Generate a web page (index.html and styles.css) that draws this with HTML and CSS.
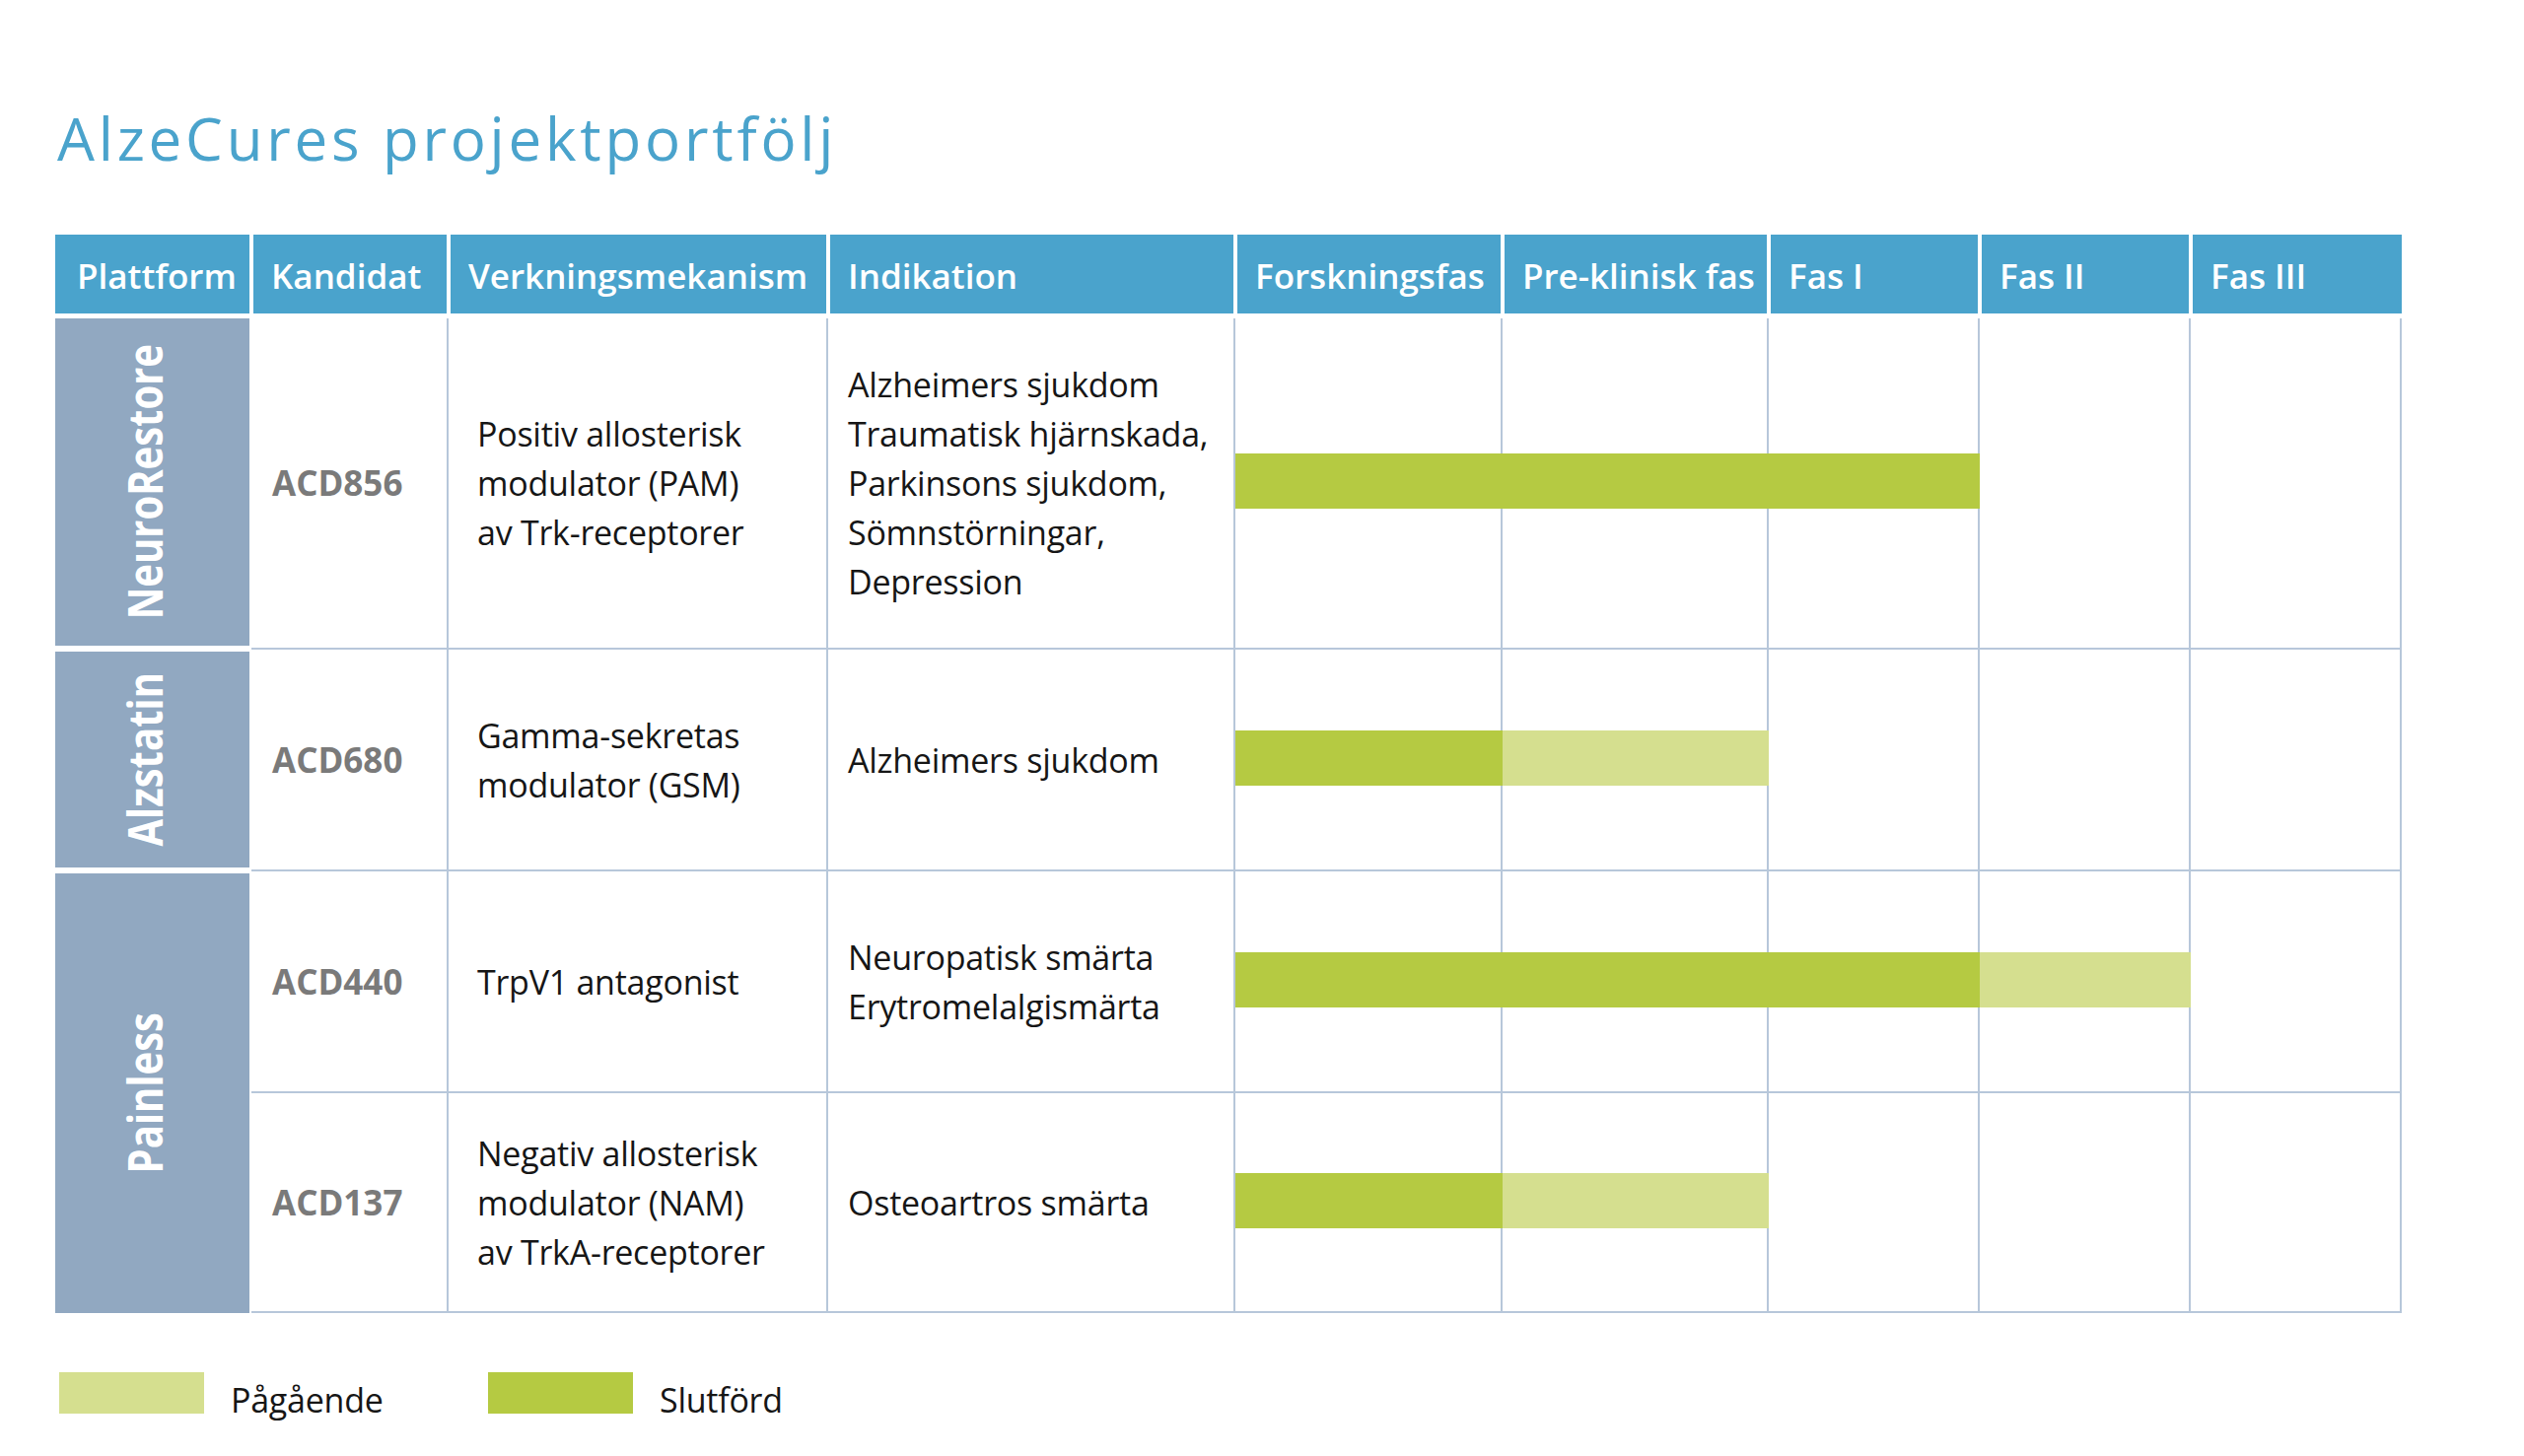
FILE: index.html
```html
<!DOCTYPE html>
<html lang="sv">
<head>
<meta charset="utf-8">
<title>AlzeCures projektportfölj</title>
<link rel="stylesheet" href="styles.css">
</head>
<body>
<div class="page">
  <h1 class="title">AlzeCures projektportfölj</h1>
  <div class="chart">
    <div class="grid head">
      <div class="hcell">Plattform</div>
      <div class="hcell">Kandidat</div>
      <div class="hcell">Verkningsmekanism</div>
      <div class="hcell">Indikation</div>
      <div class="hcell">Forskningsfas</div>
      <div class="hcell">Pre-klinisk fas</div>
      <div class="hcell">Fas I</div>
      <div class="hcell">Fas II</div>
      <div class="hcell">Fas III</div>
    </div>
    <div class="grid body">
      <!-- Row 1 -->
      <div class="plat p1"><div class="plat-in"><span class="vtext">NeuroRestore</span></div></div>
      <div class="cell cand r1 c2">ACD856</div>
      <div class="cell mech r1 c3">Positiv allosterisk<br>modulator (PAM)<br>av Trk-receptorer</div>
      <div class="cell ind r1 c4">Alzheimers sjukdom<br>Traumatisk hjärnskada,<br>Parkinsons sjukdom,<br>Sömnstörningar,<br>Depression</div>
      <div class="cell r1 c5"></div>
      <div class="cell r1 c6"></div>
      <div class="cell r1 c7"></div>
      <div class="cell r1 c8"></div>
      <div class="cell r1 c9"></div>
      <div class="seg done r1 g5-8"></div>

      <!-- Row 2 -->
      <div class="plat p2"><div class="plat-in"><span class="vtext">Alzstatin</span></div></div>
      <div class="cell cand r2 c2">ACD680</div>
      <div class="cell mech r2 c3">Gamma-sekretas<br>modulator (GSM)</div>
      <div class="cell ind r2 c4">Alzheimers sjukdom</div>
      <div class="cell r2 c5"></div>
      <div class="cell r2 c6"></div>
      <div class="cell r2 c7"></div>
      <div class="cell r2 c8"></div>
      <div class="cell r2 c9"></div>
      <div class="seg done r2 g5-6"></div>
      <div class="seg ongoing r2 g6-7"></div>

      <!-- Row 3 -->
      <div class="plat p3"><div class="plat-in"><span class="vtext">Painless</span></div></div>
      <div class="cell cand r3 c2">ACD440</div>
      <div class="cell mech r3 c3">TrpV1 antagonist</div>
      <div class="cell ind r3 c4">Neuropatisk smärta<br>Erytromelalgismärta</div>
      <div class="cell r3 c5"></div>
      <div class="cell r3 c6"></div>
      <div class="cell r3 c7"></div>
      <div class="cell r3 c8"></div>
      <div class="cell r3 c9"></div>
      <div class="seg done r3 g5-8"></div>
      <div class="seg ongoing r3 g8-9"></div>

      <!-- Row 4 -->
      <div class="cell cand r4 c2">ACD137</div>
      <div class="cell mech r4 c3">Negativ allosterisk<br>modulator (NAM)<br>av TrkA-receptorer</div>
      <div class="cell ind r4 c4">Osteoartros smärta</div>
      <div class="cell r4 c5"></div>
      <div class="cell r4 c6"></div>
      <div class="cell r4 c7"></div>
      <div class="cell r4 c8"></div>
      <div class="cell r4 c9"></div>
      <div class="seg done r4 g5-6"></div>
      <div class="seg ongoing r4 g6-7"></div>
    </div>
  </div>
  <div class="legend">
    <div class="legend-item"><span class="swatch ongoing"></span><span class="legend-label">Pågående</span></div>
    <div class="legend-item"><span class="swatch done"></span><span class="legend-label">Slutförd</span></div>
  </div>
</div>
</body>
</html>
```

FILE: styles.css
```css
html, body {
  margin: 0;
  padding: 0;
  background: #ffffff;
}

body {
  font-family: "Open Sans", "Liberation Sans", sans-serif;
  color: #1b1b1b;
}

.page {
  padding: 100px 0 0 56px;
}

.title {
  margin: 0;
  padding-left: 2px;
  font-family: "Open Sans", sans-serif;
  font-weight: 400;
  font-size: 60px;
  line-height: 80px;
  letter-spacing: 3.8px;
  color: #4aa3cc;
}

.chart {
  margin-top: 58px;
  width: 2380px;
}

.grid {
  display: grid;
  grid-template-columns: 199px 200px 385px 413px 271px 270px 214px 214px 214px;
}

/* Header */
.head {
  height: 80px;
  margin-bottom: 5px;
}

.hcell {
  display: flex;
  align-items: center;
  padding: 3px 0 0 18px;
  background: #4aa3cc;
  background-clip: padding-box;
  border-left: 2px solid #fff;
  border-right: 2px solid #fff;
  color: #ffffff;
  font-size: 35px;
  font-weight: 600;
  white-space: nowrap;
}

.hcell:first-child {
  border-left: 0;
  padding-left: 22px;
}

.hcell:last-child {
  border-right: 0;
}

/* Body */
.body {
  grid-template-rows: 336px 225px 225px 223px;
}

.cell {
  display: flex;
  flex-direction: column;
  justify-content: center;
  border-right: 2px solid #b7c7da;
  border-bottom: 2px solid #b7c7da;
  font-size: 34px;
  line-height: 50px;
  font-weight: 400;
  letter-spacing: -0.25px;
  color: #161616;
  white-space: nowrap;
}

.cand {
  padding-left: 21px;
  font-size: 35px;
  font-weight: 700;
  letter-spacing: 0;
  color: #7a7a7a;
}

.mech {
  padding-left: 29px;
}

.ind {
  padding-left: 20px;
}

.r1 { grid-row: 1; }
.r2 { grid-row: 2; }
.r3 { grid-row: 3; }
.r4 { grid-row: 4; }

.c2 { grid-column: 2; }
.c3 { grid-column: 3; }
.c4 { grid-column: 4; }
.c5 { grid-column: 5; }
.c6 { grid-column: 6; }
.c7 { grid-column: 7; }
.c8 { grid-column: 8; }
.c9 { grid-column: 9; }

/* Platform column */
.plat {
  grid-column: 1;
  display: flex;
}

.p1 {
  grid-row: 1;
  padding: 0 2px 4px 0;
}

.p2 {
  grid-row: 2;
  padding: 2px 2px 4px 0;
}

.p3 {
  grid-row: 3 / 5;
  padding: 2px 2px 0 0;
}

.plat-in {
  flex: 1;
  display: flex;
  align-items: center;
  justify-content: center;
  padding-right: 16px;
  background: #91a8c1;
}

.vtext {
  writing-mode: vertical-rl;
  transform: rotate(180deg) scaleX(1.2);
  color: #ffffff;
  font-family: "Open Sans", sans-serif;
  font-weight: 700;
  font-size: 40px;
  line-height: 1;
  white-space: nowrap;
}

/* Bars */
.seg {
  align-self: center;
  height: 56px;
  margin-bottom: 6px;
  z-index: 1;
}

.done {
  background: #b5ca42;
}

.ongoing {
  background: #d5df8f;
}

.g5-8 { grid-column: 5 / 8; }
.g5-6 { grid-column: 5 / 6; }
.g6-7 { grid-column: 6 / 7; }
.g8-9 { grid-column: 8 / 9; }

/* Legend */
.legend {
  display: grid;
  grid-template-columns: 435px auto;
  margin-top: 60px;
  padding-left: 4px;
}

.legend-item {
  display: flex;
  align-items: flex-start;
  gap: 27px;
}

.swatch {
  display: block;
  width: 147px;
  height: 42px;
}

.legend-label {
  margin-top: 3px;
  font-size: 34px;
  line-height: 50px;
  font-weight: 400;
  letter-spacing: -0.25px;
  color: #161616;
}
```
